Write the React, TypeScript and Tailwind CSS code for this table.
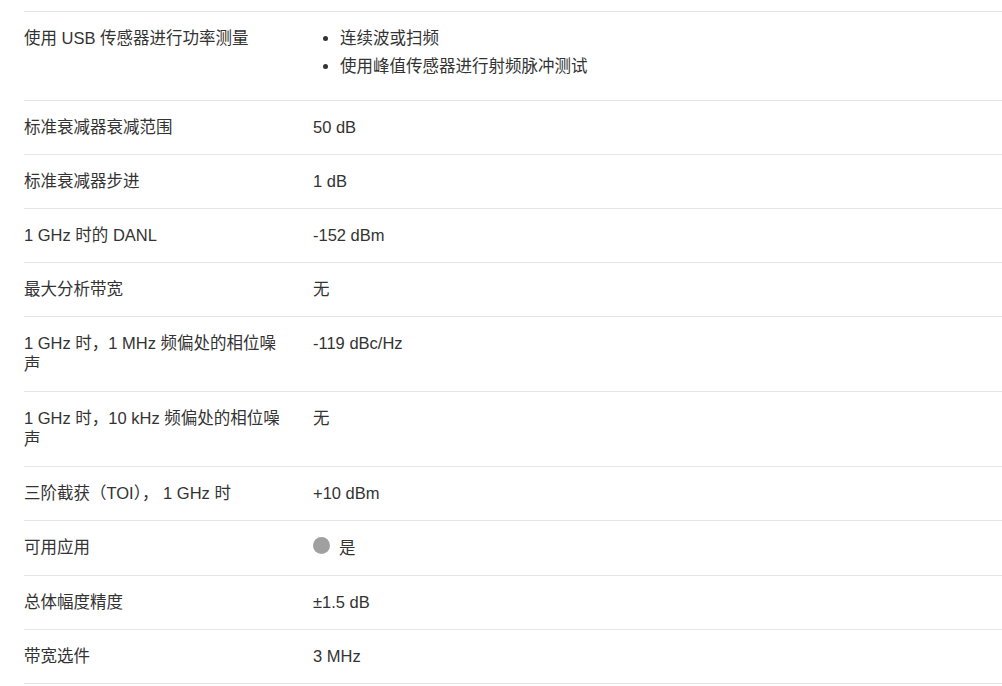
import React from "react";

type Row = { label: string; value: React.ReactNode };

const rows: Row[] = [
  {
    label: "使用 USB 传感器进行功率测量",
    value: (
      <ul className="list-disc pl-[27px]">
        <li className="mb-[7px]">连续波或扫频</li>
        <li className="mb-[7px]">使用峰值传感器进行射频脉冲测试</li>
      </ul>
    ),
  },
  { label: "标准衰减器衰减范围", value: "50 dB" },
  { label: "标准衰减器步进", value: "1 dB" },
  { label: "1 GHz 时的 DANL", value: "-152 dBm" },
  { label: "最大分析带宽", value: "无" },
  { label: "1 GHz 时，1 MHz 频偏处的相位噪声", value: "-119 dBc/Hz" },
  { label: "1 GHz 时，10 kHz 频偏处的相位噪声", value: "无" },
  { label: "三阶截获（TOI）， 1 GHz 时", value: "+10 dBm" },
  {
    label: "可用应用",
    value: (
      <span className="flex items-start gap-[9px] h-[22px]">
        <span className="inline-block w-[17px] h-[17px] rounded-full bg-[#a0a0a0]" />
        <span className="pt-[1px]">是</span>
      </span>
    ),
  },
  { label: "总体幅度精度", value: "±1.5 dB" },
  { label: "带宽选件", value: "3 MHz" },
];

export default function App() {
  return (
    <div
      className="bg-white w-[1002px] h-[686px] overflow-hidden pl-[24px] pt-[11px] text-[#333333] text-[16.5px] leading-[21px]"
      style={{ fontFamily: '"Liberation Sans", Arial, "Noto Sans CJK SC", sans-serif' }}
    >
      <div className="border-t border-[#e4e4e4]">
        {rows.map((r, i) => (
          <div key={i} className="flex border-b border-[#e4e4e4] py-[16px]">
            <div className="w-[289px] shrink-0 pr-[24px]">{r.label}</div>
            <div className="flex-1">{r.value}</div>
          </div>
        ))}
      </div>
    </div>
  );
}
